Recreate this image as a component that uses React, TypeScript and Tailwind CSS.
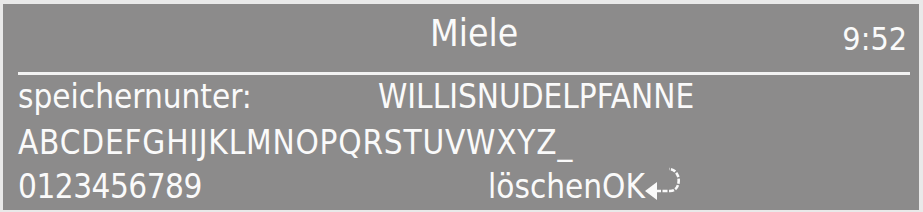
function ReturnArrow() {
  return (
    <svg width="36" height="34" viewBox="0 0 36 34" className="mt-[2px] shrink-0" fill="none">
      <path d="M0 24 L12 15 L12 33 Z" fill="#fafafa" />
      <path d="M11 24 H25 C33 24 35 15 33 9 C31 4 28 2 24 2" stroke="#fafafa" strokeWidth="2.6" strokeDasharray="5 1.5" />
    </svg>
  );
}

export default function App() {
  return (
    <div className="h-[212px] w-[923px] overflow-hidden bg-[#e9e9e9] pl-[3px] pt-[4px]">
      <div
        className="flex h-[206px] w-[916px] flex-col bg-[#8c8b8b] pt-[5px] text-[#fafafa]"
        style={{ fontFamily: '"DejaVu Sans Condensed", "DejaVu Sans", sans-serif', fontStretch: "condensed" }}
      >
        {/* header */}
        <div className="flex h-[50px] items-start">
          <span className="ml-[427px] text-[37px] leading-[50px]">Miele</span>
          <span className="ml-auto mr-[12px] mt-[5px] text-[32px] leading-[50px]">9:52</span>
        </div>
        <div className="ml-[15px] mr-[9px] mt-[13px] h-[3px] bg-[#f2f2f2]" />

        {/* rows */}
        <div className="flex h-[46px] items-start pl-[15px] text-[33px] leading-[44px]">
          <span className="w-[360px]">speichernunter:</span>
          <span>WILLISNUDELPFANNE</span>
        </div>
        <div className="flex h-[44px] items-start pl-[15px] text-[33px] leading-[44px] tracking-[0.8px]">
          <span>ABCDEFGHIJKLMNOPQRSTUVWXYZ_</span>
        </div>
        <div className="flex h-[43px] items-start pl-[15px] text-[33px] leading-[44px]">
          <span className="w-[470px] tracking-[-0.5px]">0123456789</span>
          <span>löschenOK</span>
          <ReturnArrow />
        </div>
      </div>
    </div>
  );
}
